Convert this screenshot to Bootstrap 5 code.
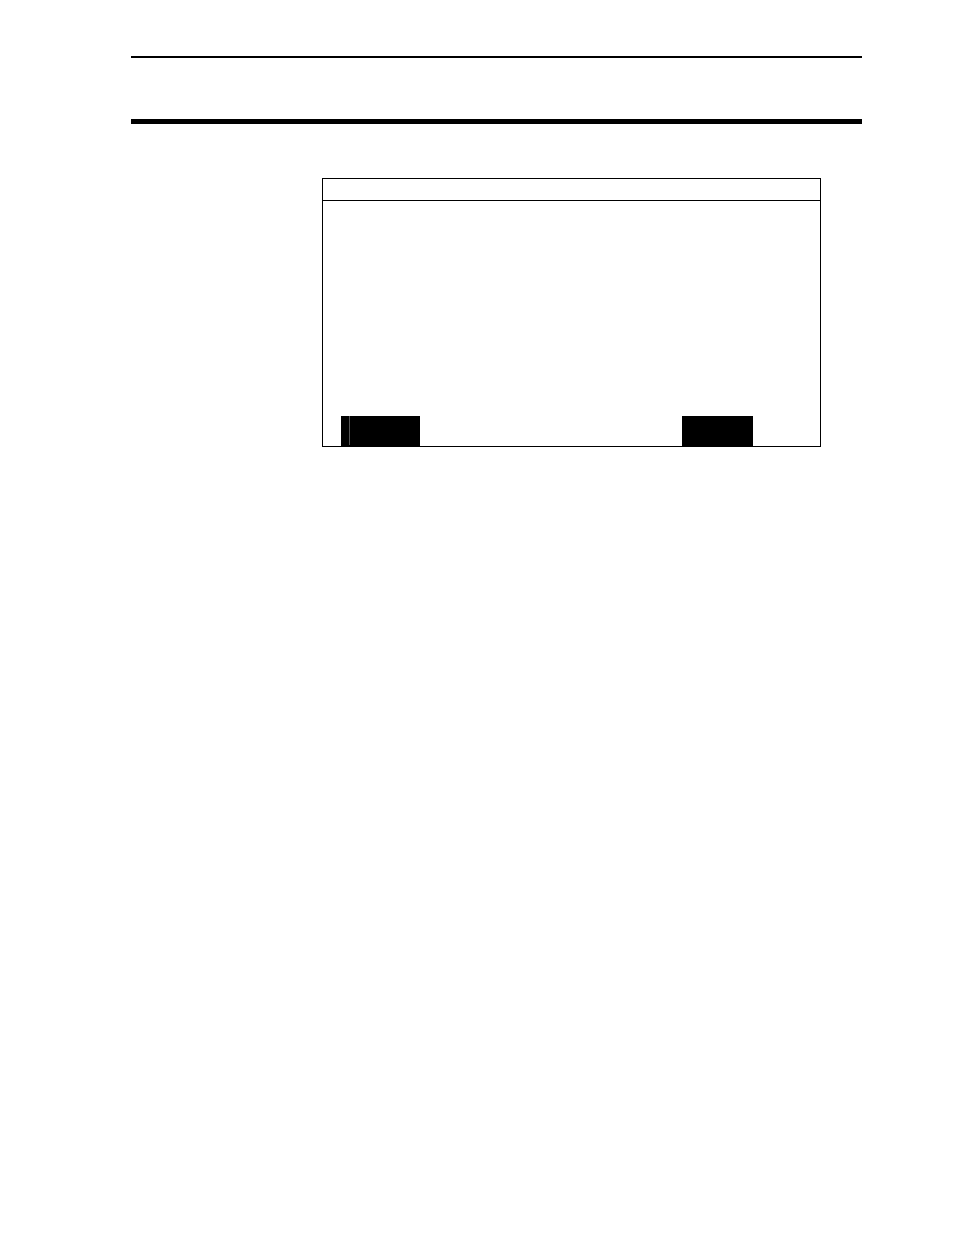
<!DOCTYPE html>
<html lang="en">
<head>
<meta charset="utf-8">
<meta name="viewport" content="width=device-width, initial-scale=1">
<link href="https://cdn.jsdelivr.net/npm/bootstrap@5.3.0/dist/css/bootstrap.min.css" rel="stylesheet">
<style>
  body { font-family: "Liberation Sans", Arial, sans-serif; }
  .sheet { padding: 56px 92px 56px 131px; }
  .sheet-head { height: 68px; border-top: 2px solid #000; border-bottom: 5px solid #000; }
  .screen { margin: 54px 41px 0 191px; border: 1px solid #000; }
  .screen-title { height: 22px; border-bottom: 1px solid #000; }
  .screen-view { height: 215px; }
  .softkeys { padding: 0 67px 0 18px; }
  .softkey { height: 30px; background: #000; }
  .softkey-start { width: 79px; padding-left: 8px; }
  .softkey-end { width: 71px; }
  .softkey-rule { width: 1px; height: 29px; background: #555; }
</style>
</head>
<body class="bg-white">
<div class="sheet">
  <header class="sheet-head"></header>
  <main class="screen">
    <div class="screen-title"></div>
    <div class="screen-view"></div>
    <div class="softkeys d-flex justify-content-between">
      <div class="softkey softkey-start"><div class="softkey-rule"></div></div>
      <div class="softkey softkey-end"></div>
    </div>
  </main>
</div>
<script src="https://cdn.jsdelivr.net/npm/bootstrap@5.3.0/dist/js/bootstrap.bundle.min.js"></script>
</body>
</html>
